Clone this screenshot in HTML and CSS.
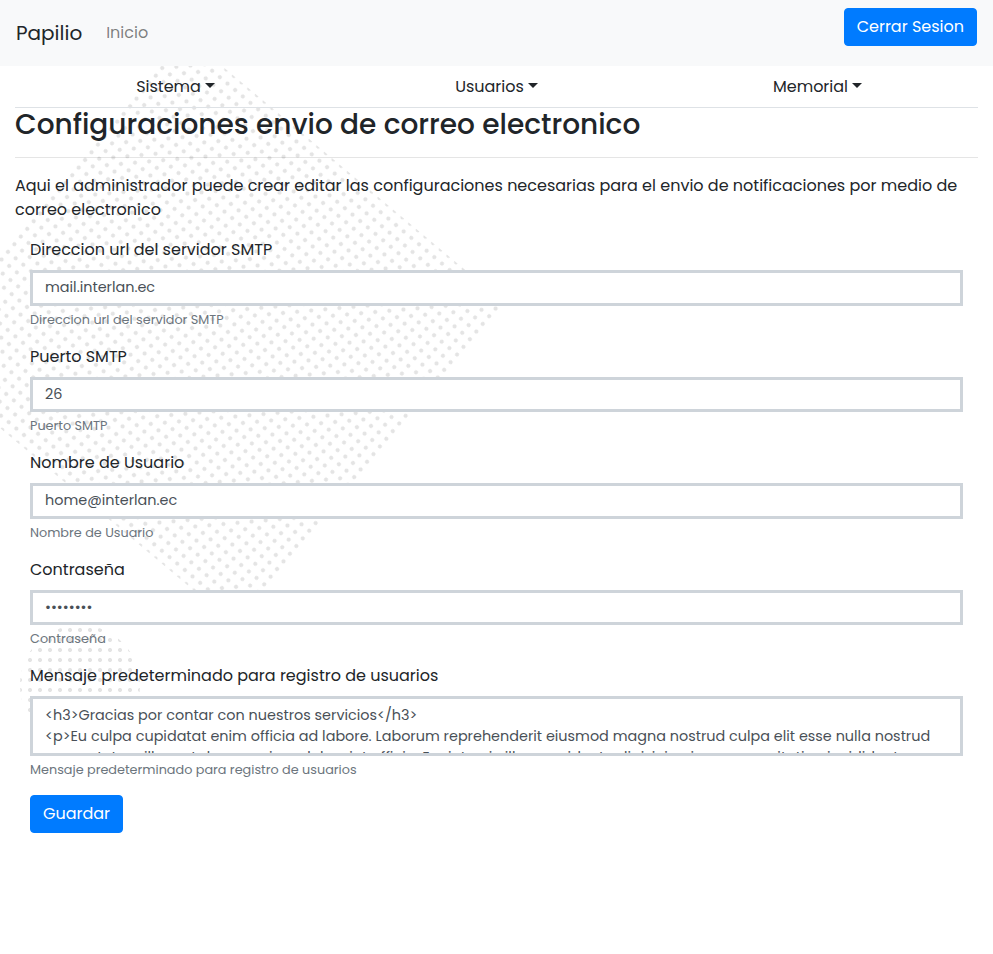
FILE: index.html
```html
<!DOCTYPE html>
<html lang="es">
<head>
<meta charset="utf-8">
<title>Papilio</title>
<link rel="stylesheet" href="styles.css">
</head>
<body>
<div class="backdrop"><div class="dots dots-square"></div><div class="dots dots-circle"></div></div>
<header class="navbar">
  <a class="brand">Papilio</a>
  <a class="nav-link">Inicio</a>
  <button class="btn btn-logout" type="button">Cerrar Sesion</button>
</header>
<main class="container">
  <nav class="menu">
    <a class="menu-item">Sistema</a>
    <a class="menu-item">Usuarios</a>
    <a class="menu-item">Memorial</a>
  </nav>
  <h3 class="title">Configuraciones envio de correo electronico</h3>
  <hr class="rule">
  <p class="intro">Aqui el administrador puede crear editar las configuraciones necesarias para el envio de notificaciones por medio de correo electronico</p>
  <form class="form">
    <div class="group">
      <label class="label" for="host">Direccion url del servidor SMTP</label>
      <input class="control" id="host" type="text" value="mail.interlan.ec">
      <small class="help">Direccion url del servidor SMTP</small>
    </div>
    <div class="group">
      <label class="label" for="port">Puerto SMTP</label>
      <input class="control" id="port" type="text" value="26">
      <small class="help">Puerto SMTP</small>
    </div>
    <div class="group">
      <label class="label" for="user">Nombre de Usuario</label>
      <input class="control" id="user" type="text" value="home@interlan.ec">
      <small class="help">Nombre de Usuario</small>
    </div>
    <div class="group">
      <label class="label" for="pass">Contraseña</label>
      <input class="control" id="pass" type="password" value="12345678">
      <small class="help">Contraseña</small>
    </div>
    <div class="group">
      <label class="label" for="message">Mensaje predeterminado para registro de usuarios</label>
      <textarea class="control message" id="message">&lt;h3&gt;Gracias por contar con nuestros servicios&lt;/h3&gt;
&lt;p&gt;Eu culpa cupidatat enim officia ad labore. Laborum reprehenderit eiusmod magna nostrud culpa elit esse nulla nostrud consectetur cillum et do ex veniam dolor sint officia. Ex sint qui cillum proident adipisicing in non exercitation incididunt exercitation.&lt;/p&gt;</textarea>
      <small class="help">Mensaje predeterminado para registro de usuarios</small>
    </div>
    <button class="btn btn-save" type="button">Guardar</button>
  </form>
</main>
</body>
</html>
```
FILE: styles.css
```css
* { box-sizing: border-box; }
body {
  margin: 0;
  background: #fff;
  color: #212529;
  font: 400 16px/1.5 Poppins, Inter, "Open Sans", sans-serif;
}
button, input, textarea { font: inherit; }

.backdrop { position: absolute; inset: 0; z-index: -1; overflow: hidden; }
.dots {
  position: absolute;
  background-image: radial-gradient(#e4e4e4 28%, transparent 31%);
  background-size: 10px 10px;
}
.dots-square {
  left: 0;
  top: 120px;
  width: 420px;
  height: 420px;
  background-position: 0 5px;
  transform: rotate(40deg);
}
.dots-circle {
  left: 20px;
  top: 625px;
  width: 120px;
  height: 120px;
  border-radius: 50%;
  background-position: 5px 0;
}

.navbar {
  display: flex;
  align-items: center;
  height: 66px;
  padding: 8px 16px;
  background: #f8f9fa;
}
.brand { margin-right: 24px; font-size: 20px; }
.nav-link { color: rgba(0, 0, 0, .5); }
.btn {
  height: 38px;
  padding: 0 12px;
  border: 1px solid #007bff;
  border-radius: 4px;
  background: #007bff;
  color: #fff;
  white-space: nowrap;
}
.btn-logout { margin-left: auto; align-self: flex-start; }
.btn-save { display: block; }

.container { padding: 0 15px; }
.menu {
  display: grid;
  grid-template-columns: repeat(3, 1fr);
  height: 42px;
  border-bottom: 1px solid #dee2e6;
  text-align: center;
}
.menu-item { padding-top: 9px; }
.menu-item::after {
  content: "";
  display: inline-block;
  margin-left: 4px;
  vertical-align: 4px;
  border: 5px solid transparent;
  border-top-color: currentColor;
  border-bottom: 0;
}

.title { margin: 0; font-size: 28px; font-weight: 500; line-height: 33.6px; }
.rule { height: 1px; margin: 15.4px 0 16px; border: 0; background: rgba(0, 0, 0, .1); }
.intro { margin: 0 0 16px; }

.form { padding: 0 15px; }
.group { margin-bottom: 16px; }
.label { display: block; height: 24px; margin-bottom: 8px; }
.control {
  display: block;
  width: 100%;
  height: 35.6px;
  padding: 4px 12px;
  border: 3px solid #ced4da;
  border-radius: 0;
  outline: 0;
  background: #fff;
  color: #495057;
  font-size: 14.4px;
}
.control.message {
  height: 60px;
  padding: 6px 12px;
  overflow: hidden;
  resize: none;
  line-height: 21px;
}
.help {
  display: block;
  margin-top: 4px;
  color: #6c757d;
  font-size: 12.8px;
  line-height: 19px;
}
```
